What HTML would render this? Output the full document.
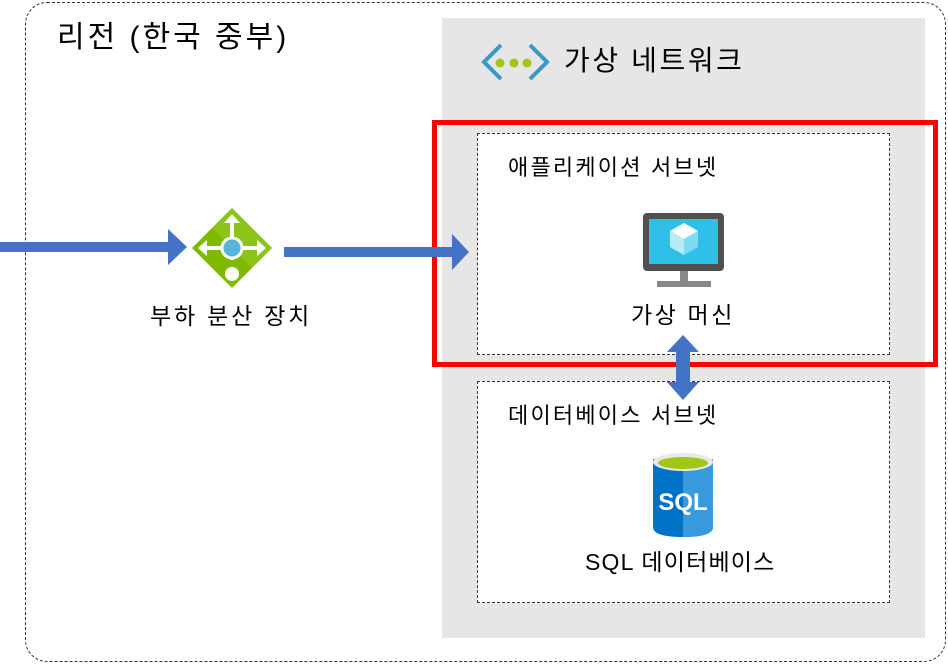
<!DOCTYPE html>
<html><head><meta charset="utf-8"><style>
body{margin:0;width:948px;height:664px;background:#fff;position:relative;overflow:hidden;font-family:"Liberation Sans","Noto Sans CJK KR",sans-serif;color:#000}
.a{position:absolute}
.t{position:absolute;white-space:nowrap;line-height:1}
</style></head><body>
<div class="a" style="left:25px;top:2px;width:919px;height:658px;border:1px dashed #333;border-radius:22px"></div>
<div class="a" style="left:442px;top:18px;width:483px;height:620px;background:#e6e6e6"></div>
<div class="a" style="left:477px;top:133px;width:411px;height:220px;border:1px dashed #333;background:#fff"></div>
<div class="a" style="left:477px;top:381px;width:411px;height:220px;border:1px dashed #333;background:#fff"></div>
<div class="a" style="left:432px;top:120px;width:496px;height:237px;border:5px solid #f00"></div>
<div class="t" style="left:57px;top:23px;font-size:30px;letter-spacing:3px">리전 (한국 중부)</div>
<div class="t" style="left:564px;top:47px;font-size:28px;letter-spacing:2.6px">가상 네트워크</div>
<div class="t" style="left:508px;top:157px;font-size:22px;letter-spacing:2.2px">애플리케이션 서브넷</div>
<div class="t" style="left:508px;top:405px;font-size:22px;letter-spacing:2.2px">데이터베이스 서브넷</div>
<div class="t" style="left:631px;top:304px;font-size:23px;letter-spacing:2.6px">가상 머신</div>
<div class="t" style="left:150px;top:305px;font-size:23px;letter-spacing:2.8px">부하 분산 장치</div>
<div class="t" style="left:585px;top:551px;font-size:23px;letter-spacing:1.2px">SQL 데이터베이스</div>
<svg class="a" style="left:0;top:0" width="948" height="664">
<path d="M0 242h168v-13l19 18-19 18v-13H0z" fill="#4472c4"/>
<path d="M284 247h168v-13l17 18-17 18v-13H284z" fill="#4472c4"/>
<path d="M683 335l16 17h-9v30h9l-16 18-16-18h9v-30h-9z" fill="#4472c4"/>
<g>
<path d="M232 208l40 40-40 40-40-40z" fill="#7fba00"/>
<path d="M232 208l40 40-20 20-40-40z" fill="#9acd32" opacity=".5"/>
<path d="M232 216v44M204 248h56" stroke="#fff" stroke-width="4"/>
<path d="M232 214l-8 9h16zM198 248l9-8v16zM266 248l-9-8v16z" fill="#fff"/>
<circle cx="232" cy="248" r="10" fill="#59b4d9" stroke="#fff" stroke-width="3"/>
<circle cx="232" cy="274" r="7" fill="#fff"/>
</g>
<g fill="none" stroke="#3999c6" stroke-width="4"><path d="M501 45l-17 17 17 17M530 45l17 17-17 17"/></g>
<g fill="#a2c617"><circle cx="500" cy="63" r="4.5"/><circle cx="514" cy="63" r="4.5"/><circle cx="527" cy="63" r="4.5"/></g>
<rect x="643" y="213" width="81" height="58" rx="4" fill="#505050"/>
<rect x="649" y="219" width="69" height="45" fill="#2fc0e8"/>
<rect x="680" y="271" width="8" height="10" fill="#888"/>
<rect x="657" y="281" width="54" height="6" fill="#888"/>
<path d="M684 223l14 8-14 8-14-8z" fill="#fff"/>
<path d="M670 231l14 8v16l-14-8z" fill="#b6ecf8"/>
<path d="M698 231l-14 8v16l14-8z" fill="#7fd9f2"/>
<path d="M653 459v68q0 10 30 10q30 0 30-10v-68z" fill="#0072c6"/>
<path d="M683 459h30v68q0 10-30 10z" fill="#3999dd"/>
<ellipse cx="683" cy="462" rx="30" ry="9" fill="#e8e8e8"/>
<ellipse cx="683" cy="463" rx="25" ry="6" fill="#a2c617"/>
<text x="683" y="510" text-anchor="middle" font-family="Liberation Sans" font-weight="bold" font-size="24" fill="#fff">SQL</text>
</svg>
</body></html>
